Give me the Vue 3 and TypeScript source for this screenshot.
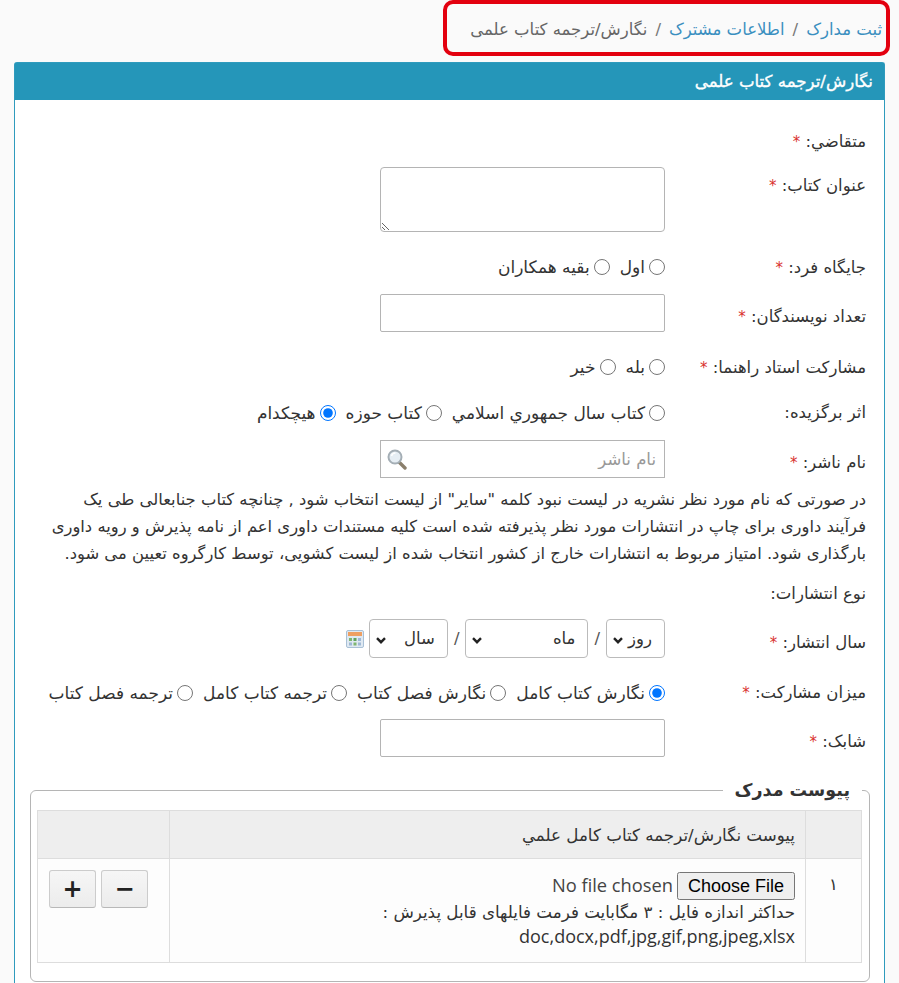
<script setup lang="ts">
const para = [
  'در صورتی که نام مورد نظر نشریه در لیست نبود کلمه "سایر" از لیست انتخاب شود , چنانچه کتاب جنابعالی طی یک',
  'فرآیند داوری برای چاپ در انتشارات مورد نظر پذیرفته شده است کلیه مستندات داوری اعم از نامه پذیرش و رویه داوری',
  'بارگذاری شود. امتیاز مربوط به انتشارات خارج از کشور انتخاب شده از لیست کشویی، توسط کارگروه تعیین می شود.',
]
const role = ['اول', 'بقیه همکاران']
const advisor = ['بله', 'خیر']
const award = ['کتاب سال جمهوري اسلامي', 'کتاب حوزه', 'هیچکدام']
const share = ['نگارش کتاب کامل', 'نگارش فصل کتاب', 'ترجمه کتاب کامل', 'ترجمه فصل کتاب']
</script>

<template>
  <div class="page" dir="rtl">
    <nav class="crumbs">
      <a>ثبت مدارک</a><span class="sep">/</span><a>اطلاعات مشترک</a><span class="sep">/</span><span>نگارش/ترجمه کتاب علمی</span>
      <div class="mark"></div>
    </nav>
    <section class="panel">
      <header class="head">نگارش/ترجمه کتاب علمی</header>
      <div class="body">
        <div class="row r-applicant"><label>متقاضي: <b>*</b></label></div>
        <div class="row r-title"><label>عنوان کتاب: <b>*</b></label><textarea class="field area"></textarea></div>
        <div class="row r-role">
          <label>جایگاه فرد: <b>*</b></label>
          <div class="opts"><span v-for="o in role" :key="o" class="opt"><input type="radio" name="role" />{{ o }}</span></div>
        </div>
        <div class="row r-count"><label>تعداد نویسندگان: <b>*</b></label><input class="field" /></div>
        <div class="row r-adv">
          <label>مشارکت استاد راهنما: <b>*</b></label>
          <div class="opts"><span v-for="o in advisor" :key="o" class="opt"><input type="radio" name="adv" />{{ o }}</span></div>
        </div>
        <div class="row r-award">
          <label>اثر برگزیده:</label>
          <div class="opts"><span v-for="(o, i) in award" :key="o" class="opt"><input type="radio" name="award" :checked="i === 2" />{{ o }}</span></div>
        </div>
        <div class="row r-pub">
          <label>نام ناشر: <b>*</b></label>
          <div class="search">
            <input class="field flat" placeholder="نام ناشر" />
            <svg class="lens" width="22" height="22" viewBox="0 0 22 22">
              <path d="M13 14l6 6" stroke="#8a7f6c" stroke-width="3.4" stroke-linecap="round" />
              <circle cx="9" cy="9" r="6.5" fill="#e6eef4" stroke="#a4aeb5" stroke-width="2" />
              <path d="M5.5 8a4 4 0 0 1 4-3" stroke="#fff" stroke-width="1.5" fill="none" />
            </svg>
          </div>
        </div>
        <div class="note"><div v-for="l in para" :key="l">{{ l }}</div></div>
        <div class="row r-type"><label>نوع انتشارات:</label></div>
        <div class="row r-year">
          <label>سال انتشار: <b>*</b></label>
          <div class="date">
            <select class="sel day"><option>روز</option></select><span class="slash">/</span>
            <select class="sel month"><option>ماه</option></select><span class="slash">/</span>
            <select class="sel year"><option>سال</option></select>
            <svg class="cal" width="18" height="18" viewBox="0 0 18 18">
              <rect x="0.5" y="0.5" width="17" height="17" rx="1.5" fill="#dfe9f2" stroke="#a9c0d6" />
              <rect x="2" y="2" width="14" height="4" fill="#ee9f62" />
              <rect x="3" y="8" width="3" height="3" fill="#7fb56f" /><rect x="7.5" y="8" width="3" height="3" fill="#5fa35f" /><rect x="12" y="8" width="3" height="3" fill="#9fb8d4" />
              <rect x="3" y="12.5" width="3" height="3" fill="#9fb8d4" /><rect x="7.5" y="12.5" width="3" height="3" fill="#7fb56f" /><rect x="12" y="12.5" width="3" height="3" fill="#9fb8d4" />
            </svg>
          </div>
        </div>
        <div class="row r-share">
          <label>میزان مشارکت: <b>*</b></label>
          <div class="opts"><span v-for="(o, i) in share" :key="o" class="opt"><input type="radio" name="share" :checked="i === 0" />{{ o }}</span></div>
        </div>
        <div class="row r-isbn"><label>شابک: <b>*</b></label><input class="field" /></div>

        <fieldset class="box">
          <legend>پیوست مدرک</legend>
          <table>
            <thead>
              <tr><th class="c-num"></th><th class="c-main">پیوست نگارش/ترجمه کتاب کامل علمي</th><th class="c-btn"></th></tr>
            </thead>
            <tbody>
              <tr>
                <td class="c-num num">۱</td>
                <td class="c-main">
                  <input type="file" class="file" />
                  <div class="hint">حداکثر اندازه فایل : ۳ مگابایت فرمت فایلهای قابل پذیرش :</div>
                  <div class="hint latin" dir="ltr">doc,docx,pdf,jpg,gif,png,jpeg,xlsx</div>
                </td>
                <td class="c-btn">
                  <div class="btns"><button class="btn">−</button><button class="btn">+</button></div>
                </td>
              </tr>
            </tbody>
          </table>
        </fieldset>
      </div>
    </section>
  </div>
</template>

<style>
html, body { margin: 0; background: #fff; }
</style>

<style scoped>
.page {
  box-sizing: border-box;
  width: 899px;
  height: 983px;
  overflow: hidden;
  background: #fafafa;
  padding: 12px 14px 0 14px;
  font: 16.5px/20px "DejaVu Sans", "Noto Sans", sans-serif;
  color: #333;
}
.crumbs {
  position: relative;
  height: 50px;
  margin-left: 444px;
  padding-right: 3px;
  display: flex;
  align-items: flex-start;
  padding-top: 8px;
  box-sizing: border-box;
  font-size: 16.5px;
  color: #666;
  white-space: nowrap;
}
.crumbs a { color: #3a8fc0; }
.sep { margin: 0 8px; color: #777; }
.mark {
  position: absolute;
  left: -15px;
  right: -5px;
  top: -12px;
  bottom: 6px;
  border: 4px solid #e3000f;
  border-radius: 10px;
  pointer-events: none;
}
.panel {
  background: #fff;
  border: 1px solid #2f9bbd;
  border-bottom: 0;
  border-radius: 3px 3px 0 0;
  height: 921px;
  box-sizing: border-box;
}
.head {
  height: 37px;
  background: #2596b9;
  color: #fff;
  font-size: 16.6px;
  -webkit-text-stroke: 0.35px #fff;
  line-height: 37px;
  padding-right: 11px;
}
.body { padding-right: 18px; padding-left: 15px; }
.row { display: flex; align-items: center; }
.row label { width: 186px; margin-left: 15px; flex: none; padding-top: 2px; }
.row b { color: #d9322e; font-weight: 400; font-size: 15px; }
.r-applicant { height: 20px; margin-top: 31px; }
.r-title { align-items: flex-start; margin-top: 16px; }
.r-title label { padding-top: 9px; }
.r-role { height: 20px; margin-top: 25px; }
.r-count { margin-top: 17px; }
.r-count label { padding-top: 8px; }
.r-adv { height: 20px; margin-top: 25px; }
.r-award { height: 20px; margin-top: 26px; }
.r-award label { padding-top: 0; }
.r-pub { margin-top: 17px; }
.r-pub label { padding-top: 8px; }
.r-type { height: 20px; margin-top: 16px; }
.r-year { margin-top: 16px; }
.r-year label { padding-top: 9px; }
.r-share { height: 20px; margin-top: 25px; }
.r-share label { padding-top: 0; }
.r-isbn { margin-top: 16px; }
.r-isbn label { padding-top: 8px; }
.field {
  width: 285px;
  height: 38px;
  box-sizing: border-box;
  border: 1px solid #b4b4b4;
  border-radius: 2px;
  background: #fff;
  padding: 4px 8px;
  font: inherit;
  outline: none;
}
.area { height: 65px; display: block; border-radius: 4px; }
.flat { border-radius: 0; }
.field::placeholder { color: #999; }
.opts { display: flex; gap: 10px; white-space: nowrap; font-size: 17px; }
.opt { display: inline-flex; align-items: center; gap: 4px; }
.opt input { margin: 0; width: 16px; height: 16px; }
.search { position: relative; height: 38px; }
.lens { position: absolute; left: 6px; top: 8px; }
.note {
  margin: 8px 0 0;
  line-height: 27px;
  font-size: 16.4px;
  white-space: nowrap;
}
.date { display: flex; align-items: center; gap: 6px; }
.sel {
  appearance: none;
  height: 39px;
  box-sizing: border-box;
  border: 1px solid #bbb;
  border-radius: 4px;
  background: #fff url("data:image/svg+xml,%3Csvg xmlns='http://www.w3.org/2000/svg' width='10' height='7' viewBox='0 0 10 7'%3E%3Cpath d='M1 1.2l4 4 4-4' fill='none' stroke='%23222' stroke-width='2.4'/%3E%3C/svg%3E") no-repeat 6px 17px;
  font: inherit;
  color: #333;
  padding: 0 12px 0 18px;
}
.day { width: 59px; }
.month { width: 123px; }
.year { width: 79px; }
.slash { color: #555; }
.cal { margin-right: -1px; }
.box {
  margin: 23px -4px 0 0;
  border: 1px solid #b5b5b5;
  border-radius: 6px;
  padding: 10px 7px 20px 7px;
  min-width: 0;
  height: 202px;
  box-sizing: border-box;
}
legend {
  font-size: 17.5px;
  font-weight: 700;
  color: #333;
  padding: 0 12px;
  margin-right: 0;
}
table { width: 824px; border-collapse: collapse; table-layout: fixed; }
th, td { border: 1px solid #ddd; text-align: right; box-sizing: border-box; }
th { height: 48px; background: #eee; font-weight: 400; font-size: 16.7px; padding: 0 10px; }
td { height: 104px; background: #fdfdfd; vertical-align: top; padding: 13px 10px 0; }
.c-num { width: 56px; }
.c-main { width: 636px; }
.c-btn { width: 132px; }
td.c-btn { padding: 11px 21px 0 11px; }
td.num { text-align: center; padding-top: 16px; }
.file {
  display: block;
  font: 18.3px/24px "Open Sans", sans-serif;
  color: #444;
  width: 320px;
  height: 28px;
}
.file::file-selector-button { font: 18px "Liberation Sans", sans-serif; height: 28px; margin-inline-end: 4px; padding: 0 9px; }
.hint { font-size: 16.7px; line-height: 24px; white-space: nowrap; }
.hint.latin { font-family: "Open Sans", sans-serif; font-size: 18px; text-align: right; line-height: 24px; }
.btns { display: flex; gap: 5px; }
.btn {
  width: 48px;
  height: 38px;
  padding: 0;
  background: linear-gradient(#f6f6f6, #ececec);
  border: 1px solid #ccc;
  border-bottom-color: #b8b8b8;
  border-radius: 3px;
  font: 900 24px/1 "DejaVu Sans", sans-serif;
  color: #222;
}
</style>
